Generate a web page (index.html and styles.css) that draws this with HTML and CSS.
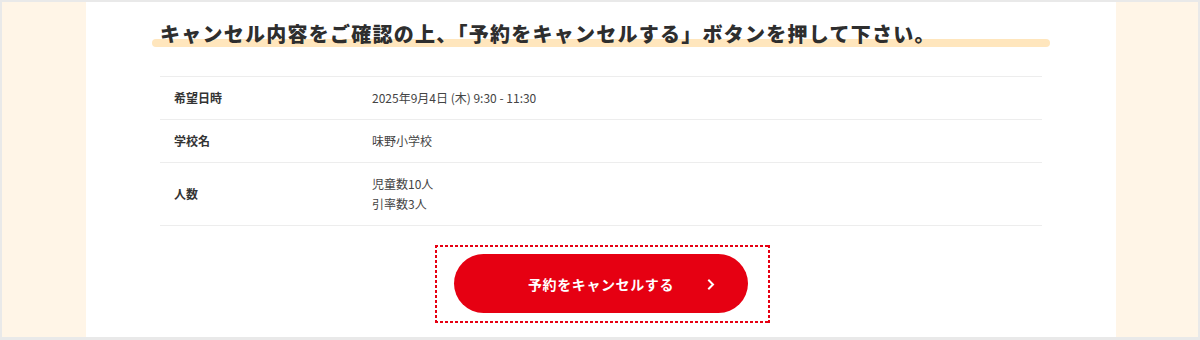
FILE: index.html
```html
<!DOCTYPE html>
<html lang="ja">
<head>
<meta charset="utf-8">
<title>予約キャンセル確認</title>
<link rel="stylesheet" href="styles.css">
</head>
<body>
<div class="frame">
  <main class="sheet">
    <h2 class="title">キャンセル内容をご確認の上、「予約をキャンセルする」ボタンを押して下さい。</h2>
    <table class="detail">
      <tr>
        <th>希望日時</th>
        <td>2025年9月4日 (木) 9:30 - 11:30</td>
      </tr>
      <tr>
        <th>学校名</th>
        <td>味野小学校</td>
      </tr>
      <tr>
        <th>人数</th>
        <td>児童数10人<br>引率数3人</td>
      </tr>
    </table>
    <div class="actions">
      <div class="focus-ring">
        <button class="cancel-btn" type="button">
          <span class="cancel-label">予約をキャンセルする</span>
          <svg class="chev" width="8" height="11" viewBox="0 0 8 11" aria-hidden="true"><path d="M2 1.5 L6 5.5 L2 9.5" fill="none" stroke="#fff" stroke-width="2" stroke-linecap="square"/></svg>
        </button>
      </div>
    </div>
  </main>
</div>
</body>
</html>
```

FILE: styles.css
```css
html, body {
  margin: 0;
  padding: 0;
}
body {
  background: #e9e9e9;
  font-family: "Noto Sans CJK JP", "Noto Sans", sans-serif;
  color: #333;
}
.frame {
  margin: 2px 2px 3px 2px;
  height: 335px;
  background: #fff5e7;
  padding: 0 82px 0 84px;
  box-sizing: border-box;
  overflow: hidden;
}
.sheet {
  background: #fff;
  height: 100%;
  padding: 17px 74px 0;
  box-sizing: border-box;
}
.title {
  position: relative;
  z-index: 0;
  margin: 0;
  font-size: 20px;
  line-height: 30px;
  font-weight: 900;
  letter-spacing: 1.25px;
  color: #2e2e2e;
  white-space: nowrap;
}
.title::after {
  content: "";
  position: absolute;
  z-index: -1;
  left: -8px;
  right: -8px;
  bottom: 2px;
  height: 8px;
  border-radius: 4px;
  background: #ffe6bd;
}
.detail {
  width: 100%;
  margin-top: 27px;
  border-collapse: collapse;
  font-size: 12px;
  line-height: 20px;
}
.detail tr {
  border-top: 1px solid #ededed;
  border-bottom: 1px solid #ededed;
}
.detail th {
  width: 198px;
  text-align: left;
  font-weight: 700;
  padding: 11px 0 11px 14px;
  color: #333;
  vertical-align: middle;
}
.detail td {
  padding: 11px 0;
  color: #444;
  vertical-align: middle;
}
.actions {
  display: flex;
  justify-content: center;
  margin-top: 19px;
}
.focus-ring {
  padding: 9px 22px 10px 19px;
  margin-left: 3px;
  background:
    repeating-linear-gradient(90deg, #e60012 0 3px, transparent 3px 5px) top left / 100% 2px no-repeat,
    repeating-linear-gradient(90deg, #e60012 0 3px, transparent 3px 5px) bottom left / 100% 2px no-repeat,
    repeating-linear-gradient(180deg, #e60012 0 3px, transparent 3px 5px) top left / 2px 100% no-repeat,
    repeating-linear-gradient(180deg, #e60012 0 3px, transparent 3px 5px) top right / 2px 100% no-repeat;
}
.cancel-btn {
  position: relative;
  display: flex;
  align-items: center;
  justify-content: center;
  width: 294px;
  height: 59px;
  border: 0;
  border-radius: 30px;
  background: #e60012;
  color: #fff;
  font-family: "Noto Sans CJK JP", "Noto Sans", sans-serif;
  font-size: 14px;
  font-weight: 700;
  letter-spacing: 0.6px;
  padding: 0;
  cursor: pointer;
}
.chev {
  position: absolute;
  right: 33px;
  top: 25px;
}
```
